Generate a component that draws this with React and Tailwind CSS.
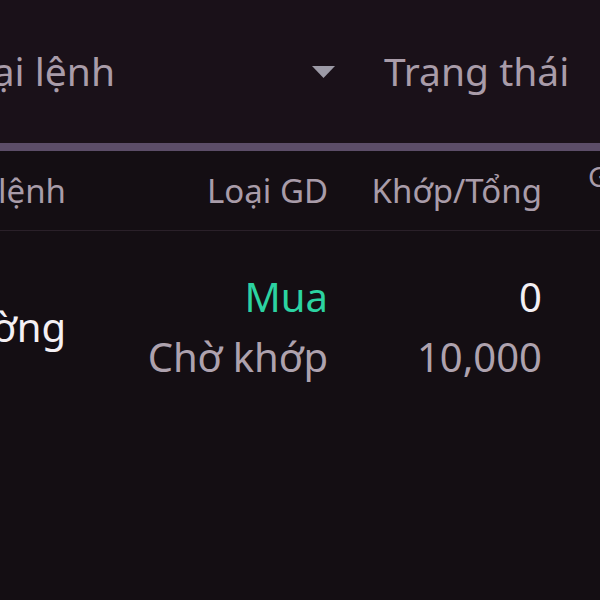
export default function App() {
  return (
    <div className="h-[600px] w-[600px] overflow-hidden bg-[#140e13] font-['Noto_Sans',sans-serif]">
      {/* filter bar */}
      <div className="flex h-[143px] items-center bg-[#1a1119] text-[39px] text-[#a99ca9]">
        <div className="flex w-[115px] shrink-0 justify-end whitespace-nowrap">Loại lệnh</div>
        <svg className="ml-[197px] h-[12px] w-[23px] shrink-0" viewBox="0 0 23 12">
          <path d="M0 0 H23 L11.5 12 Z" fill="#9c9aa6" />
        </svg>
        <div className="ml-[49px] whitespace-nowrap">Trạng thái</div>
      </div>
      <div className="h-[8px] bg-[#5c4d68]" />

      {/* table header */}
      <div className="flex h-[80px] items-center border-b border-[#2a2029] text-[33px] text-[#a99ca9]">
        <div className="flex w-[66px] shrink-0 justify-end whitespace-nowrap">Số lệnh</div>
        <div className="w-[262px] shrink-0 text-right whitespace-nowrap">Loại GD</div>
        <div className="w-[214px] shrink-0 text-right whitespace-nowrap">Khớp/Tổng</div>
        <div className="ml-[46px] self-start pt-[4px] whitespace-nowrap text-[28px]">Giá</div>
      </div>

      {/* order row */}
      <div className="flex items-center pt-[36px] text-[40px] leading-[60px]">
        <div className="flex w-[66px] shrink-0 justify-end whitespace-nowrap text-[#f4f0f4]">Thường</div>
        <div className="flex w-[262px] shrink-0 flex-col items-end whitespace-nowrap">
          <span className="text-[#2cd3a1]">Mua</span>
          <span className="text-[#aea2ae]">Chờ khớp</span>
        </div>
        <div className="flex w-[214px] shrink-0 flex-col items-end whitespace-nowrap">
          <span className="text-[#f4f0f4]">0</span>
          <span className="text-[#aea2ae]">10,000</span>
        </div>
      </div>
    </div>
  );
}
